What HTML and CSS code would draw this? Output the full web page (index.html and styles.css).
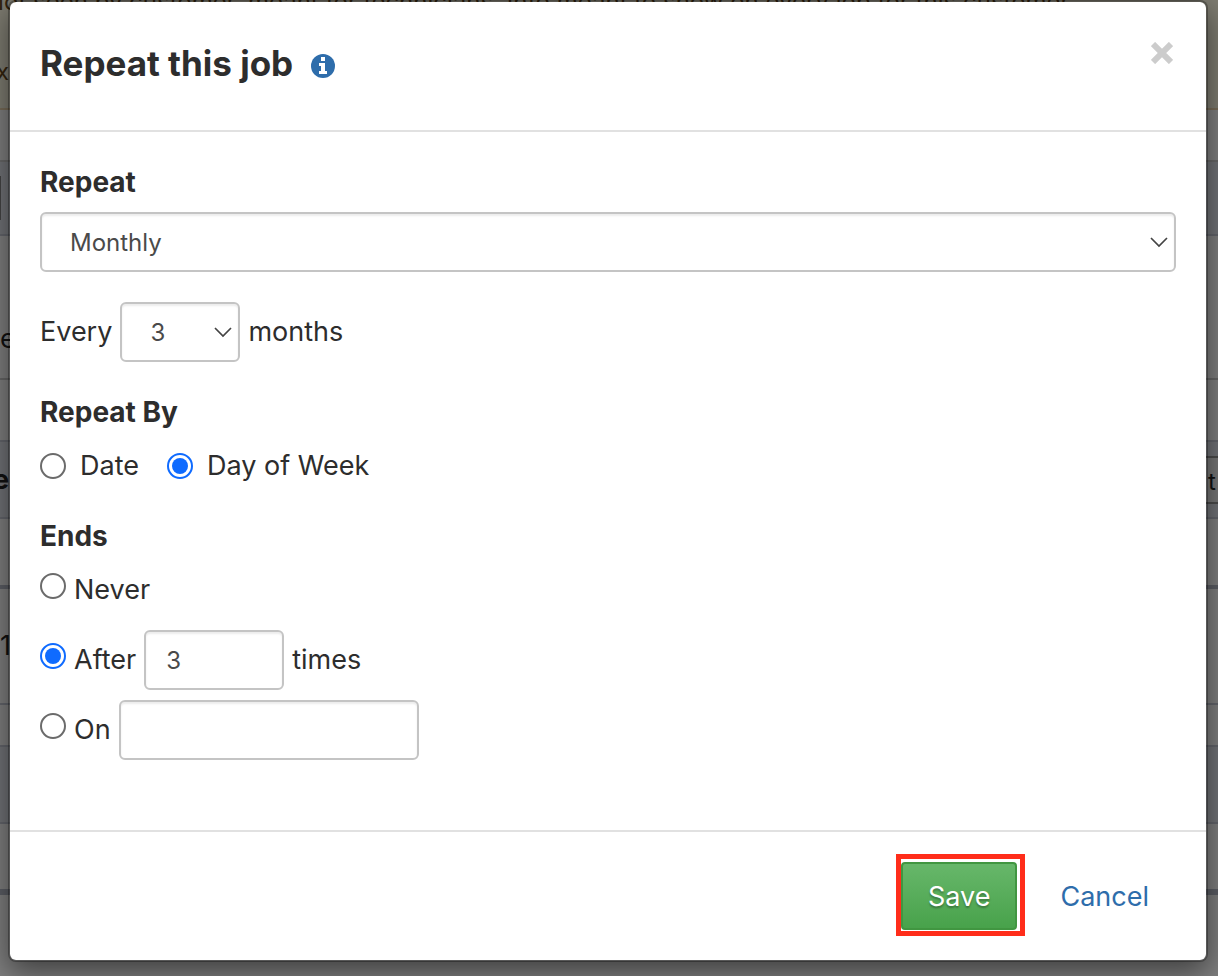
FILE: index.html
```html
<!DOCTYPE html>
<html lang="en">
<head>
    <meta charset="UTF-8">
    <meta name="viewport" content="width=device-width, initial-scale=1.0">
    <title>Repeat this job</title>
    <link rel="stylesheet" href="styles.css">
</head>
<body>
    <!-- Job page behind the dialog -->
    <div class="page" aria-hidden="true">
        <div class="notice">
            <p>Not seen by customer, meant for technicians. Info meant to show on every job for this customer</p>
            <p>x</p>
        </div>
        <div class="band spacer"></div>
        <div class="band heading"><span class="edge"></span></div>
        <div class="band details"><span>e</span></div>
        <div class="band row"></div>
        <div class="band toolbar"><b>e</b><span class="tool">t</span></div>
        <div class="band row thick"></div>
        <div class="band item"><span>1</span></div>
        <div class="band total"></div>
        <div class="band heading second"></div>
        <div class="band row last thick"></div>
    </div>

    <div class="backdrop">
        <form class="modal" role="dialog" aria-labelledby="modal-title">
            <header class="modal-header">
                <h1 id="modal-title">Repeat this job</h1>
                <svg class="info-icon" viewBox="0 0 24 24" role="img" aria-label="Info">
                    <circle cx="12" cy="12" r="12" fill="#2e6dab"/>
                    <path d="M10 3h4v4h-4zM8 9h6v8h2v3H8v-3h2v-5H8z" fill="#fff"/>
                </svg>
                <button type="button" class="close" aria-label="Close">
                    <svg viewBox="0 0 22 22"><path d="M2 2l18 18M20 2L2 20" stroke="#ccc" stroke-width="6"/></svg>
                </button>
            </header>

            <div class="modal-body">
                <label class="group-title" for="repeat">Repeat</label>
                <select id="repeat" class="field repeat-select">
                    <option>Daily</option>
                    <option>Weekly</option>
                    <option selected>Monthly</option>
                    <option>Yearly</option>
                </select>

                <div class="line every">
                    <label for="interval">Every</label>
                    <select id="interval" class="field interval-select">
                        <option>1</option>
                        <option>2</option>
                        <option selected>3</option>
                    </select>
                    <span>months</span>
                </div>

                <fieldset>
                    <legend class="group-title">Repeat By</legend>
                    <div class="options">
                        <label><input type="radio" name="repeat-by"> Date</label>
                        <label><input type="radio" name="repeat-by" checked> Day of Week</label>
                    </div>
                </fieldset>

                <fieldset>
                    <legend class="group-title">Ends</legend>
                    <div class="ends">
                        <div class="line never">
                            <input type="radio" name="ends" id="never">
                            <label for="never">Never</label>
                        </div>
                        <div class="line">
                            <input type="radio" name="ends" id="after" checked>
                            <label for="after">After</label>
                            <input type="text" class="field times-input" value="3" aria-label="Number of times">
                            <span>times</span>
                        </div>
                        <div class="line">
                            <input type="radio" name="ends" id="on">
                            <label for="on">On</label>
                            <input type="text" class="field date-input" aria-label="End date">
                        </div>
                    </div>
                </fieldset>
            </div>

            <footer class="modal-footer">
                <div class="highlight">
                    <button type="submit" class="save">Save</button>
                </div>
                <button type="button" class="cancel">Cancel</button>
            </footer>
        </form>
    </div>
</body>
</html>
```
FILE: styles.css
```css
:root {
    --text-color: #2d2d2d;
    --link-color: #2e6dab;
    --border-color: #c4c4c4;
    --line-color: #e1e1e1;
    --radio-color: #0f6bff;
}

* {
    box-sizing: border-box;
}

body {
    margin: 0;
    font-family: Inter, "Liberation Sans", sans-serif;
    font-size: 27px;
    line-height: 40px;
    color: var(--text-color);
    background-color: #fff;
    min-height: 100vh;
    position: relative;
    overflow: hidden;
}

/* Page behind */
.notice {
    height: 110px;
    background-color: #fcf8e3;
    border-bottom: 2px solid #f0d9b0;
    color: #66481c;
    overflow: hidden;
    white-space: nowrap;
}

.notice p {
    margin: -18px 0 0 -14px;
    font-size: 24px;
}

.notice p + p {
    margin: 30px 0 0 -4px;
}

.band {
    display: flex;
    justify-content: space-between;
    align-items: center;
    height: 62px;
    border-bottom: 2px solid #c8ccd8;
    overflow: hidden;
    color: #222;
}

.spacer {
    height: 52px;
    border-color: #d0d0d0;
}

.heading {
    height: 74px;
    background-color: #e3e6ee;
}

.edge {
    width: 1px;
    height: 44px;
    background-color: #888;
}

.details {
    height: 144px;
    padding-top: 64px;
    border-color: #ccc;
}

.toolbar {
    height: 77px;
    background-color: #e3e6ee;
}

.toolbar b {
    margin-left: -7px;
}

.toolbar .tool {
    width: 14px;
    height: 48px;
    padding-left: 4px;
    border: solid #999;
    border-width: 2px 0;
    background-color: #eee;
    font-size: 24px;
    line-height: 48px;
}

.thick {
    height: 70px;
    border-bottom: 4px solid #b8bccb;
}

.item {
    height: 116px;
}

.total {
    height: 42px;
}

.heading.second {
    height: 77px;
}

.last {
    height: 71px;
    border-bottom-width: 6px;
}

/* Dialog */
.backdrop {
    position: absolute;
    inset: 0;
    padding: 0 10px 0 8px;
    background-color: rgba(0, 0, 0, 0.5);
}

.modal {
    background-color: #fff;
    background-clip: padding-box;
    border: 2px solid rgba(0, 0, 0, 0.3);
    border-radius: 8px;
    box-shadow: 0 10px 30px rgba(0, 0, 0, 0.5);
}

.modal-header {
    display: flex;
    align-items: flex-start;
    gap: 18px;
    padding: 36px 30px 42px;
    border-bottom: 2px solid var(--line-color);
}

.modal-header h1 {
    margin: 0;
    font-size: 35px;
    line-height: 50px;
    font-weight: 700;
}

.info-icon {
    width: 24px;
    height: 24px;
    margin-top: 16px;
}

.close {
    display: flex;
    margin-left: auto;
    padding: 4px 3px;
    border: 0;
    background: none;
    cursor: pointer;
}

.close svg {
    width: 22px;
    height: 22px;
}

.modal-body {
    padding: 30px 30px 70px;
}

.group-title {
    display: block;
    padding: 0;
    font-size: 28px;
    font-weight: 700;
}

.field {
    height: 60px;
    border: 2px solid var(--border-color);
    border-radius: 6px;
    background-color: #fff;
    box-shadow: inset 0 2px 2px rgba(0, 0, 0, 0.08);
    color: #4a4a4a;
    font-family: inherit;
    font-size: 24px;
    padding: 0 20px;
}

select.field {
    appearance: none;
    padding: 0 28px;
    background-image: url("data:image/svg+xml,%3Csvg xmlns='http://www.w3.org/2000/svg' width='18' height='11'%3E%3Cpath d='M1 1l8 8 8-8' fill='none' stroke='%23444' stroke-width='1.7'/%3E%3C/svg%3E");
    background-repeat: no-repeat;
    background-position: right 6px center;
}

.repeat-select {
    width: 100%;
    margin-top: 10px;
    display: block;
}

.interval-select {
    width: 120px;
}

.times-input {
    width: 140px;
}

.date-input {
    width: 300px;
}

.line {
    display: flex;
    align-items: baseline;
    gap: 8px;
}

.every {
    margin: 30px 0;
}

fieldset {
    min-width: 0;
    margin: 0 0 20px;
    padding: 0;
    border: 0;
}

fieldset:last-child {
    margin-bottom: 0;
}

.options {
    display: flex;
    gap: 28px;
    padding: 14px 0 10px;
}

.options label {
    display: flex;
    align-items: center;
    gap: 14px;
}

.ends {
    display: flex;
    flex-direction: column;
    gap: 10px;
    padding-top: 4px;
}

.never {
    height: 60px;
    padding-top: 10px;
}

input[type=radio] {
    appearance: none;
    flex: none;
    width: 26px;
    height: 26px;
    margin: 0;
    padding: 3px;
    border: 2px solid #6b6b6b;
    border-radius: 50%;
    background-color: #fff;
    background-clip: content-box;
}

input[type=radio]:checked {
    border-color: var(--radio-color);
    background-color: var(--radio-color);
}

.modal-footer {
    display: flex;
    justify-content: flex-end;
    gap: 16px;
    padding: 30px;
    border-top: 2px solid var(--line-color);
}

.modal-footer button {
    height: 68px;
    padding: 0 25px;
    font-family: inherit;
    font-size: 27px;
    cursor: pointer;
}

.highlight {
    position: relative;
}

/* red frame around the button */
.highlight::after {
    content: "";
    position: absolute;
    inset: -8px -8px -6px -5px;
    border: 5px solid #ff2d1a;
    pointer-events: none;
}

.save {
    border: 2px solid #419641;
    border-radius: 4px;
    background-image: linear-gradient(#67b76a, #48a24b);
    color: #fff;
    text-shadow: 0 2px 2px rgba(0, 0, 0, 0.3);
}

.cancel {
    border: 2px solid transparent;
    background: none;
    color: var(--link-color);
}
```
